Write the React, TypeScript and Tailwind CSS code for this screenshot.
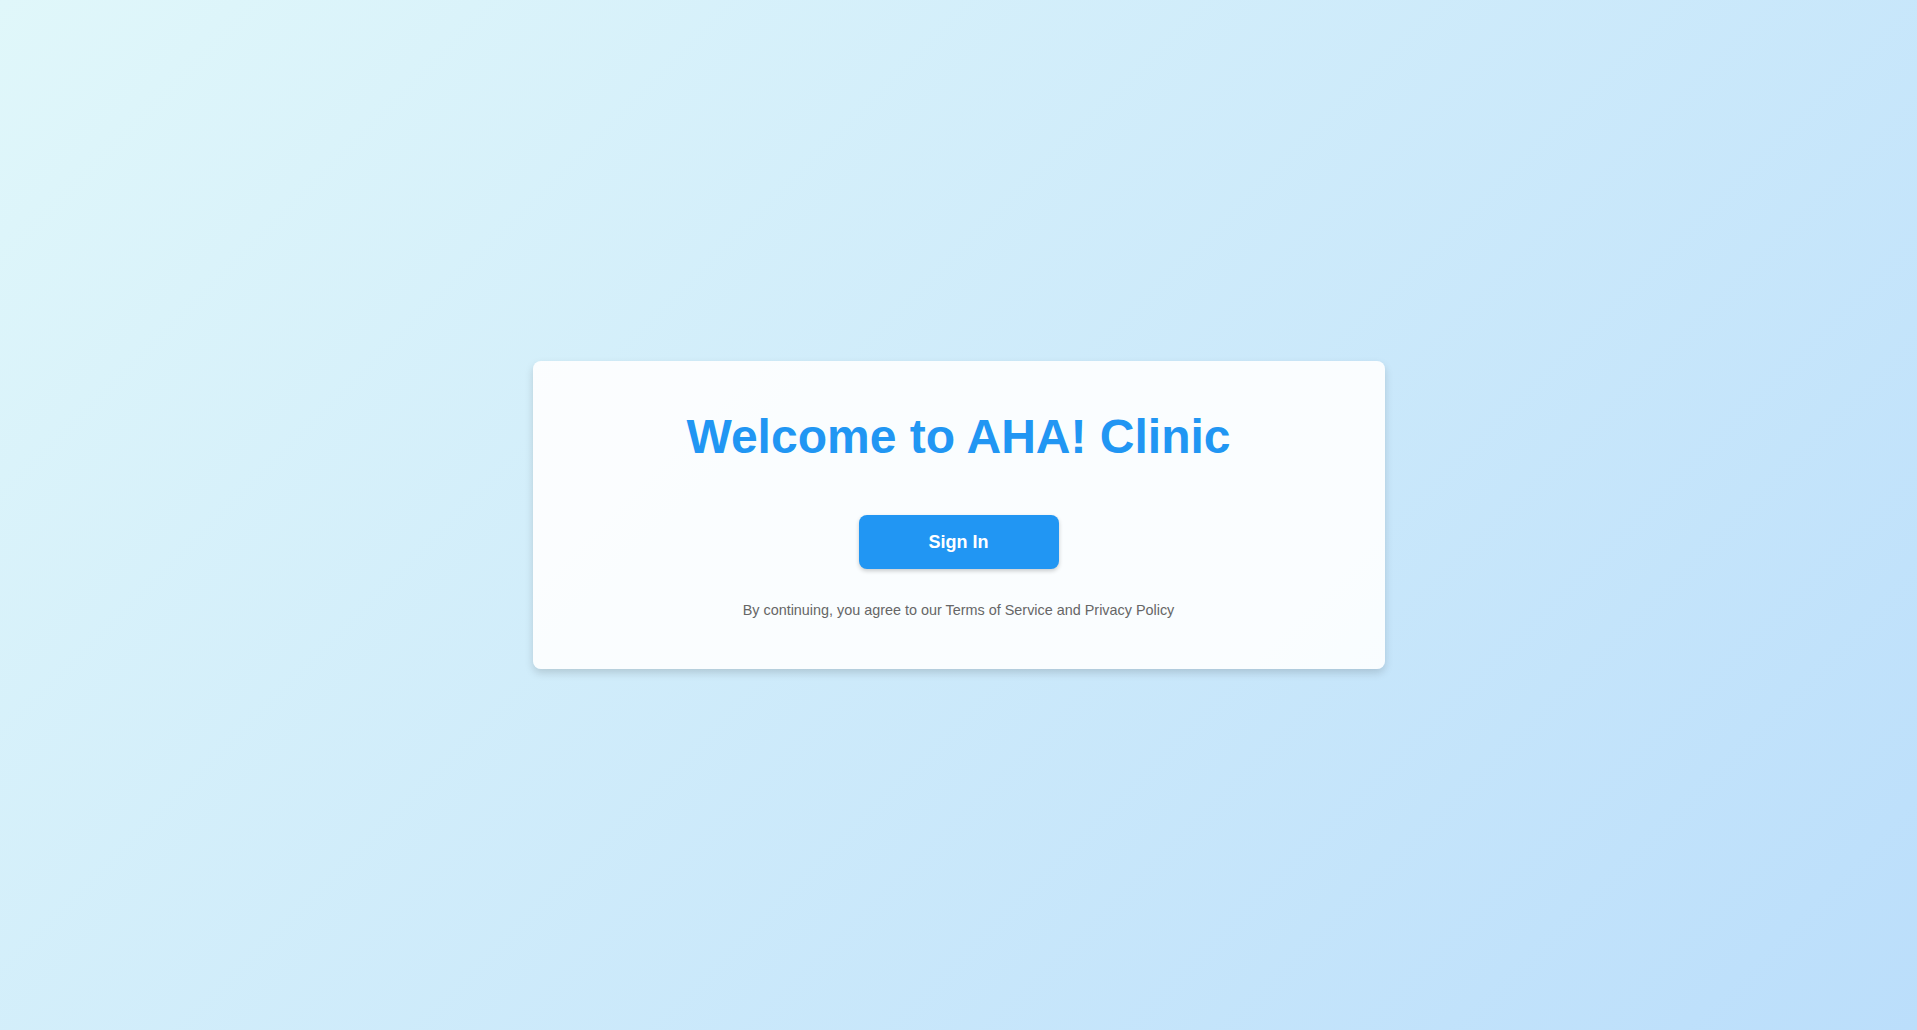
export default function App() {
  return (
    <div
      className="flex h-[1030px] w-full items-center justify-center bg-[linear-gradient(135deg,#e0f7fa,#bbdefb)]"
      style={{ fontFamily: '"Liberation Sans", Arial, sans-serif' }}
    >
      <div className="flex w-[852px] flex-col items-center rounded-lg bg-white/90 px-12 pt-12 pb-[51px] shadow-[0_4px_8px_rgba(0,0,0,0.15)]">
        <h1 className="m-0 text-[48px] leading-[normal] font-bold text-[#2196f3]">
          Welcome to AHA! Clinic
        </h1>
        <button className="mt-[51px] flex h-[54px] w-[200px] items-center justify-center rounded-lg bg-[#2196f3] text-[18px] leading-[normal] font-bold text-white shadow-[0_2px_4px_rgba(0,0,0,0.2)]">
          Sign In
        </button>
        <p className="mt-[33px] text-[0.9rem] leading-[normal] text-[#666666]">
          By continuing, you agree to our Terms of Service and Privacy Policy
        </p>
      </div>
    </div>
  );
}
